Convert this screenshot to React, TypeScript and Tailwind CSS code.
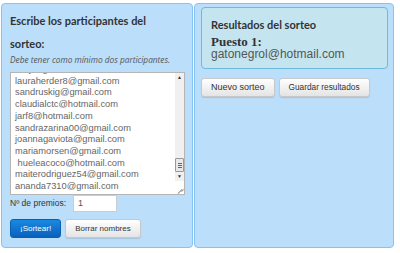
import React from "react";

const participants = [
  "lauraherder8@gmail.com",
  "sandruskig@gmail.com",
  "claudialctc@hotmail.com",
  "jarf8@hotmail.com",
  "sandrazarina00@gmail.com",
  "joannagaviota@gmail.com",
  "mariamorsen@gmail.com",
  " hueleacoco@hotmail.com",
  "maiterodriguez54@gmail.com",
  "ananda7310@gmail.com",
];

const grayBtn =
  "h-[19px] whitespace-nowrap rounded-[3px] border border-[#c8c8c8] bg-gradient-to-b from-white to-[#e4e4e4] px-[9px] leading-none text-[#333] shadow-[0_1px_1px_rgba(0,0,0,0.12)]";

const App = () => {
  return (
    <div
      className="flex h-[253px] w-[400px] gap-[1px] bg-white pl-[1px] pt-[3px] pb-[5px]"
      style={{ fontFamily: "'Liberation Sans', Arial, sans-serif" }}>
      {/* participantes */}
      <section className="flex w-[192px] flex-col rounded-[4px] border border-[#86c3f5] bg-[#bbdefb] pl-[8px] pr-[6px]">
        <h2
          className="mt-[5px] pr-[20px] text-[11px] font-bold leading-[23px] text-[#333]"
          style={{ fontFamily: "Lato, sans-serif" }}>
          Escribe los participantes del sorteo:
        </h2>
        <p
          className="whitespace-nowrap text-[8.3px] italic leading-[10px] text-[#555]"
          style={{ fontFamily: "'Open Sans', sans-serif" }}>
          Debe tener como mínimo dos participantes.
        </p>
        <div className="mt-[7px] flex h-[123px] w-[175px] overflow-hidden border border-[#b5b5b5] bg-white">
          <div className="flex-1 overflow-hidden pl-[4px]">
            <ul className="-mt-[9px] text-[9.3px] leading-[11.7px] text-[#666]">
              <li>ruby@gmail.com</li>
              {participants.map((p, i) => (
                <li key={i} className="whitespace-pre">
                  {p}
                </li>
              ))}
            </ul>
          </div>
          <div className="flex w-[9px] flex-col bg-[#f0f0f0]">
            <div className="flex h-[9px] items-center justify-center text-[5px] leading-none text-[#333]">▲</div>
            <div className="flex-1" />
            <div className="flex h-[14px] flex-col items-center justify-center gap-[1px] rounded-[1px] border border-[#999] bg-[#e8e8e8]">
              <span className="h-[1px] w-[4px] bg-[#666]" />
              <span className="h-[1px] w-[4px] bg-[#666]" />
              <span className="h-[1px] w-[4px] bg-[#666]" />
            </div>
            <div className="flex h-[9px] items-center justify-center text-[5px] leading-none text-[#333]">▼</div>
            <div className="relative h-[13px] bg-white">
              <span className="absolute bottom-[2px] right-[1px] h-[1px] w-[6px] -rotate-45 bg-[#999]" />
              <span className="absolute bottom-[3px] right-[0px] h-[1px] w-[3px] -rotate-45 bg-[#999]" />
            </div>
          </div>
        </div>
        <div className="flex items-center gap-[7px]">
          <span className="text-[8.5px] text-[#333]">Nº de premios:</span>
          <div className="flex h-[17px] w-[44px] items-center border border-[#ccc] bg-white px-[4px] text-[9px] text-[#555]">
            1
          </div>
        </div>
        <div className="mt-[7px] flex gap-[4px]">
          <button className="h-[19px] whitespace-nowrap rounded-[3px] border border-[#0b5fb0] bg-gradient-to-b from-[#1a8ae2] to-[#0960bd] px-[9px] text-[8px] leading-none text-white">
            ¡Sortear!
          </button>
          <button className={grayBtn + " text-[8px]"}>Borrar nombres</button>
        </div>
      </section>

      {/* resultados */}
      <section className="flex w-[200px] flex-col rounded-[4px] border border-[#86c3f5] bg-[#bbdefb] px-[6px]">
        <div className="mt-[3px] h-[62px] w-[187px] rounded-[4px] border border-[#6cbadc] bg-[#c4e5f0] px-[9px] pt-[9px]">
          <h3
            className="text-[11px] font-bold leading-[16px] text-[#333]"
            style={{ fontFamily: "Lato, sans-serif" }}>
            Resultados del sorteo
          </h3>
          <p
            className="mt-[2px] text-[13px] font-bold leading-[13px] text-[#333]"
            style={{ fontFamily: "'Liberation Serif', serif" }}>
            Puesto 1:
          </p>
          <p className="text-[12px] leading-[13px] text-[#555]">gatonegrol@hotmail.com</p>
        </div>
        <div className="mt-[9px] flex gap-[4px]">
          <button className={grayBtn + " text-[9px]"}>Nuevo sorteo</button>
          <button className={grayBtn + " text-[8.3px]"}>Guardar resultados</button>
        </div>
      </section>
    </div>
  );
};

export default App;
